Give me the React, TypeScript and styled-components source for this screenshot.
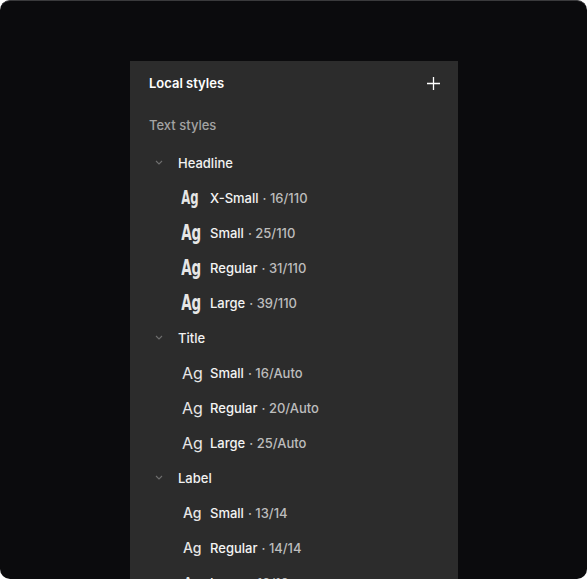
import React from "react"
import styled, { createGlobalStyle } from "styled-components"

type Kind = "headline" | "title" | "label"

type Style = { name: string; meta: string; size?: "xs" | "md" }

type Group = { title: string; kind: Kind; items: Style[] }

const groups: Group[] = [
  {
    title: "Headline",
    kind: "headline",
    items: [
      { name: "X-Small", meta: "16/110", size: "xs" },
      { name: "Small", meta: "25/110" },
      { name: "Regular", meta: "31/110" },
      { name: "Large", meta: "39/110" },
    ],
  },
  {
    title: "Title",
    kind: "title",
    items: [
      { name: "Small", meta: "16/Auto" },
      { name: "Regular", meta: "20/Auto" },
      { name: "Large", meta: "25/Auto" },
    ],
  },
  {
    title: "Label",
    kind: "label",
    items: [
      { name: "Small", meta: "13/14" },
      { name: "Regular", meta: "14/14" },
      { name: "Large", meta: "16/16" },
    ],
  },
]

const GlobalStyle = createGlobalStyle`
  html, body {
    margin: 0;
    padding: 0;
    background: #ffffff;
  }
  body {
    font-family: Inter, "Noto Sans", "Liberation Sans", sans-serif;
    -webkit-font-smoothing: antialiased;
  }
`

const Frame = styled.div`
  width: 587px;
  height: 579px;
  box-sizing: border-box;
  background: #0b0b0d;
  border-top: 1px solid #3a3a3c;
  border-radius: 10px;
  overflow: hidden;
  display: flex;
  justify-content: center;
  padding-top: 60px;
`

const Panel = styled.section`
  width: 328px;
  margin-left: 1px;
  background: #2c2c2c;
  display: flex;
  flex-direction: column;
  align-self: flex-start;
`

const Header = styled.header`
  height: 44px;
  padding: 0 18px 0 19px;
  display: flex;
  align-items: center;
  justify-content: space-between;
  color: #ffffff;
  font-size: 13px;
  font-weight: 600;
`

const AddButton = styled.button`
  width: 14px;
  height: 14px;
  padding: 0;
  border: none;
  background: none;
  color: #ffffff;
  display: flex;
  align-items: center;
  justify-content: center;
`

const SectionTitle = styled.div`
  height: 40px;
  padding-left: 19px;
  display: flex;
  align-items: center;
  color: #a3a3a3;
  font-size: 13px;
  font-weight: 500;
`

const GroupRow = styled.div`
  height: 35px;
  padding-left: 25px;
  display: flex;
  align-items: center;
  gap: 15px;
  color: #f2f2f2;
  font-size: 13px;
  font-weight: 500;
`

const Chevron = styled.span`
  width: 8px;
  display: flex;
  justify-content: center;
  color: #6e6e6e;
`

const StyleRow = styled.div`
  height: 35px;
  padding-left: 50px;
  display: flex;
  align-items: center;
  font-size: 13px;
`

const Preview = styled.span<{ $kind: Kind; $size?: "xs" | "md" }>`
  width: 30px;
  padding-left: 2px;
  box-sizing: border-box;
  color: #e6e6e6;
  line-height: 1;
  white-space: nowrap;
  ${({ $kind, $size }) =>
    $kind === "headline"
      ? `
    font-family: "DejaVu Sans Condensed", "DejaVu Sans", sans-serif;
    font-weight: 700;
    font-size: ${$size === "xs" ? 19 : 22}px;
    transform: scaleX(0.68);
    transform-origin: left center;
    letter-spacing: -0.3px;
  `
      : $kind === "title"
      ? `
    font-size: 16px;
    font-weight: 400;
  `
      : `
    font-size: 14px;
    font-weight: 500;
    padding-left: 3px;
  `}
`

const Name = styled.span`
  color: #f4f4f4;
  font-weight: 500;
`

const Meta = styled.span`
  color: #bdbdbd;
  font-weight: 500;
  margin-left: 4px;
`

const App = () => {
  return (
    <>
      <GlobalStyle />
      <Frame>
        <Panel>
          <Header>
            <span>Local styles</span>
            <AddButton aria-label="Add style">
              <svg width="13" height="13" viewBox="0 0 13 13" fill="none" stroke="currentColor" strokeWidth="1.3">
                <path d="M6.5 0v13M0 6.5h13" />
              </svg>
            </AddButton>
          </Header>
          <SectionTitle>Text styles</SectionTitle>
          {groups.map((g) => (
            <React.Fragment key={g.title}>
              <GroupRow>
                <Chevron>
                  <svg width="8" height="5" viewBox="0 0 8 5" fill="none" stroke="currentColor" strokeWidth="1.1">
                    <path d="M1 1l3 3 3-3" />
                  </svg>
                </Chevron>
                <span>{g.title}</span>
              </GroupRow>
              {g.items.map((s) => (
                <StyleRow key={s.name}>
                  <Preview $kind={g.kind} $size={s.size}>Ag</Preview>
                  <Name>{s.name}</Name>
                  <Meta>· {s.meta}</Meta>
                </StyleRow>
              ))}
            </React.Fragment>
          ))}
        </Panel>
      </Frame>
    </>
  )
}

export default App
